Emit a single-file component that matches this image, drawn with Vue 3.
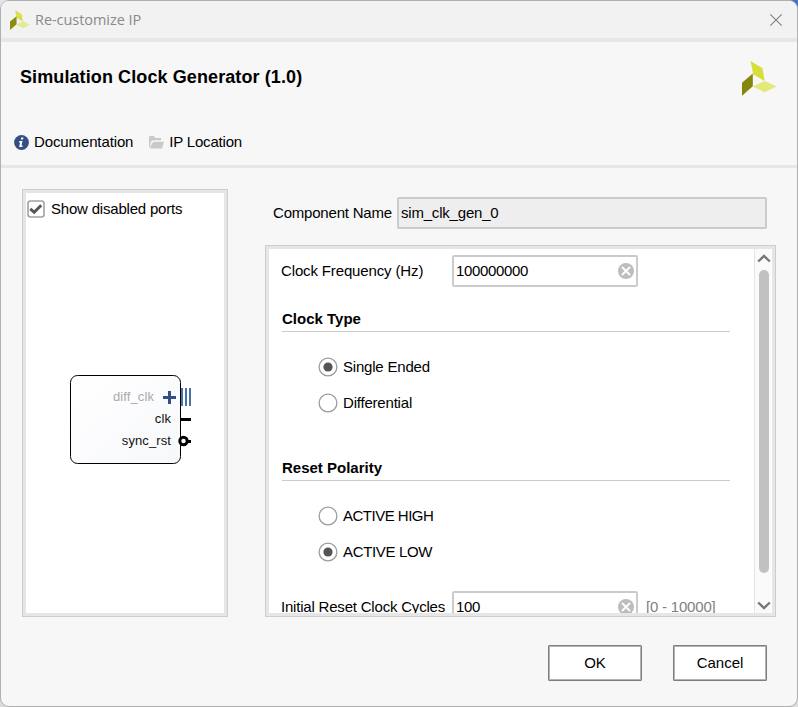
<script setup>
import { ref } from 'vue'

const showDisabled = ref(true)
const componentName = ref('sim_clk_gen_0')
const frequency = ref('100000000')
const resetCycles = ref('100')
const groups = ref([
  { title: 'Clock Type', selected: 'Single Ended', options: ['Single Ended', 'Differential'] },
  { title: 'Reset Polarity', selected: 'ACTIVE LOW', options: ['ACTIVE HIGH', 'ACTIVE LOW'] },
])
</script>

<template>
  <div class="backdrop">
    <main class="dialog">
      <header class="titlebar">
        <svg class="app-icon" width="20" height="20" viewBox="0 0 35 35">
          <path d="M9 0 20.5 7.5 22.5 20 11.5 13.5Z" fill="#d9e04f" />
          <path d="M0 20 11.5 11V25L0 35Z" fill="#8a8c10" />
          <path d="M11 26 23 19.5 35 26 23 32Z" fill="#e4e995" />
        </svg>
        <span class="window-title">Re-customize IP</span>
        <svg class="close" width="14" height="14" viewBox="0 0 14 14">
          <path d="M1.3 1.3 12.7 12.7M12.7 1.3 1.3 12.7" stroke="#858585" stroke-width="1.2" fill="none" />
        </svg>
      </header>

      <section class="heading">
        <div class="heading-row">
          <h1>Simulation Clock Generator (1.0)</h1>
          <svg width="35" height="35" viewBox="0 0 35 35">
            <path d="M8.6 0 20.5 7.3 22.6 20 11.2 13.2Z" fill="#d6de38" />
            <path d="M0 21.7 10.8 12.6V25.2L0 34.8Z" fill="#85870b" />
            <path d="M11 25.6 22.6 20 34.7 25.6 22.6 31.2Z" fill="#e2e97a" />
          </svg>
        </div>
        <nav class="links">
          <a class="link">
            <svg width="15" height="15" viewBox="0 0 15 15">
              <circle cx="7.5" cy="7.5" r="7.4" fill="#344f86" />
              <path d="M7.2 2.5h2.3L9 4.6H6.8ZM5.3 6h3.2L7.5 10.6h1.2L8.4 12H5.1L6.1 7.4H5Z" fill="#fff" />
            </svg>
            <span class="doc">Documentation</span>
          </a>
          <a class="link">
            <svg width="15" height="15" viewBox="0 0 15 15">
              <path d="M0 12.5V2Q0 1 1 1H4.8L6.4 3H12V5.2H4L1.5 7V11Z" fill="#c9c9c9" />
              <path d="M5 6.8H15L12.9 13.6H0.8L3.2 8.2Z" fill="#c9c9c9" />
            </svg>
            <span>IP Location</span>
          </a>
        </nav>
      </section>

      <section class="body">
        <aside class="panel preview">
          <label class="check" @click="showDisabled = !showDisabled">
            <svg width="18" height="18" viewBox="0 0 18 18">
              <rect x="1" y="1" width="16" height="16" rx="2.5" fill="#fff" stroke="#a2a2a2" stroke-width="1.6" />
              <path v-if="showDisabled" d="M3.3 8.8 7.2 12.3 14.2 5.2" fill="none" stroke="#555" stroke-width="2.9" />
            </svg>
            <span>Show disabled ports</span>
          </label>
          <svg class="block" width="124" height="90" viewBox="0 0 124 90">
            <defs>
              <linearGradient id="fill" x1="0" y1="0" x2="1" y2="1">
                <stop offset="0" stop-color="#fff" />
                <stop offset="1" stop-color="#f7f8fb" />
              </linearGradient>
            </defs>
            <rect x=".5" y=".5" width="110" height="88" rx="7" fill="url(#fill)" stroke="#000" />
            <g class="ports">
              <text v-if="showDisabled" x="84" y="26" fill="#aaa">diff_clk</text>
              <text x="101" y="48" fill="#111">clk</text>
              <text x="101" y="70" fill="#111">sync_rst</text>
            </g>
            <path d="M93 22.5H106M99.5 16V29" stroke="#344f86" stroke-width="3" />
            <path d="M112 13V31M116 13V31M120 13V31" stroke="#4672a5" stroke-width="2" />
            <path d="M111 44.5H121M117 66.5H121" stroke="#000" stroke-width="3" />
            <circle cx="113.5" cy="66" r="3.7" fill="#fff" stroke="#000" stroke-width="3" />
          </svg>
        </aside>

        <div class="settings">
          <div class="name-row">
            <span class="name-label">Component Name</span>
            <div class="field disabled"><span>{{ componentName }}</span></div>
          </div>

          <div class="panel options">
            <div class="form">
              <div class="form-row">
                <span class="label freq">Clock Frequency (Hz)</span>
                <div class="field number">
                  <span>{{ frequency }}</span>
                  <svg width="16" height="16" viewBox="0 0 16 16">
                    <circle cx="8" cy="8" r="8" fill="#bdbdbd" />
                    <path d="M4 4 12 12M12 4 4 12" stroke="#fff" stroke-width="1.9" />
                  </svg>
                </div>
              </div>
              <fieldset v-for="g in groups" :key="g.title" class="group">
                <h2>{{ g.title }}</h2>
                <label v-for="o in g.options" :key="o" class="radio" :class="{ high: o === 'ACTIVE HIGH', low: o === 'ACTIVE LOW' }" @click="g.selected = o">
                  <svg width="20" height="20" viewBox="0 0 20 20">
                    <circle cx="10" cy="10" r="8.9" fill="#fff" stroke="#9c9c9c" stroke-width="1.3" />
                    <circle v-if="g.selected === o" cx="10" cy="10" r="4.6" fill="#555" />
                  </svg>
                  <span>{{ o }}</span>
                </label>
              </fieldset>
              <div class="form-row">
                <span class="label">Initial Reset Clock Cycles</span>
                <div class="field number">
                  <span>{{ resetCycles }}</span>
                  <svg width="16" height="16" viewBox="0 0 16 16">
                    <circle cx="8" cy="8" r="8" fill="#bdbdbd" />
                    <path d="M4 4 12 12M12 4 4 12" stroke="#fff" stroke-width="1.9" />
                  </svg>
                </div>
                <span class="hint">[0 - 10000]</span>
              </div>
            </div>
            <div class="scrollbar">
              <svg width="14" height="9" viewBox="0 0 14 9"><path d="M1.2 7.5 7 2 12.8 7.5" fill="none" stroke="#777" stroke-width="2.4" /></svg>
              <div class="thumb"></div>
              <svg width="14" height="9" viewBox="0 0 14 9"><path d="M1.2 1.5 7 7 12.8 1.5" fill="none" stroke="#777" stroke-width="2.4" /></svg>
            </div>
          </div>
        </div>
      </section>

      <footer class="actions">
        <button>OK</button>
        <button>Cancel</button>
      </footer>
    </main>
  </div>
</template>

<style>
body {
  margin: 0;
  overflow: hidden;
}
</style>

<style scoped>
* {
  box-sizing: border-box;
}
.backdrop {
  width: 798px;
  height: 707px;
  background: linear-gradient(90deg, #e4e4e4 50%, #4472c4 50%) top / 100% 12px no-repeat, #dcdcdc;
}
.dialog {
  width: 798px;
  height: 707px;
  border: 1px solid #b0b0b0;
  border-radius: 9px;
  background: #f7f7f7;
  overflow: hidden;
  display: flex;
  flex-direction: column;
  font: 15px/20px "Liberation Sans", Arial, sans-serif;
  letter-spacing: -0.2px;
  color: #000;
  white-space: nowrap;
}
svg {
  display: block;
  flex: none;
}
.titlebar {
  height: 41px;
  flex: none;
  display: flex;
  align-items: center;
  padding: 0 14px 0 9px;
  background: #f2f2f2;
  border-bottom: 4px solid #e6e6e6;
}
.window-title {
  margin-left: 5px;
  font: 14.5px/20px "Open Sans", sans-serif;
  letter-spacing: -0.05px;
  color: #8a8a8a;
}
.close {
  margin-left: auto;
}
.heading {
  height: 126px;
  flex: none;
  border-bottom: 3px solid #e6e6e6;
}
.heading-row {
  display: flex;
  justify-content: space-between;
  padding: 19px 20px 0 19px;
}
h1 {
  margin: 4px 0 0;
  font-size: 18px;
  line-height: 24px;
  letter-spacing: 0.1px;
}
.links {
  display: flex;
  gap: 16px;
  padding: 36px 0 0 13px;
}
.link {
  display: flex;
  align-items: center;
  gap: 5px;
}
.doc {
  letter-spacing: -0.12px;
}
.body {
  height: 449px;
  flex: none;
  display: flex;
  align-items: flex-start;
  gap: 37px;
  padding: 21px 21px 0;
}
.panel {
  border: 1px solid #cdcdcd;
  box-shadow: inset 0 0 0 3px #e6e6e6;
  background: #fff;
  padding: 3px;
}
.preview {
  width: 206px;
  height: 428px;
}
.check {
  display: flex;
  align-items: center;
  gap: 6px;
  padding: 6px 0 0 1px;
}
.block {
  margin: 156px 0 0 44px;
}
.ports {
  font-size: 13px;
  letter-spacing: 0.1px;
  text-anchor: end;
}
.settings {
  width: 511px;
}
.name-row {
  display: flex;
  align-items: center;
  padding: 8px 9px 0 8px;
}
.name-label {
  width: 124px;
}
.field {
  width: 186px;
  height: 32px;
  border: 2px solid #cbcbcb;
  border-radius: 2px;
  background: #fff;
  display: flex;
  align-items: center;
  justify-content: space-between;
  padding: 0 2px;
}
.field.number {
  letter-spacing: -0.34px;
}
.field.disabled {
  width: 370px;
  background: #eee;
}
.options {
  height: 372px;
  margin-top: 16px;
  padding-right: 4px;
  display: flex;
  overflow: hidden;
}
.form {
  flex: 1;
  height: 364px;
  overflow: hidden;
  padding: 6px 0 0 12px;
}
.form-row {
  display: flex;
  align-items: center;
}
.label {
  width: 171px;
}
.freq {
  letter-spacing: -0.14px;
}
.hint {
  margin-left: 8px;
  color: #808080;
}
.group {
  border: 0;
  margin: 0 0 0 1px;
  padding: 22px 0 5px;
  min-width: 0;
  width: 448px;
}
h2 {
  font-size: 15px;
  line-height: 20px;
  letter-spacing: 0;
  height: 23px;
  margin: 0 0 17px;
  border-bottom: 1px solid #cbcbcb;
}
.group + .group {
  padding-top: 32px;
  padding-bottom: 21px;
}
.radio {
  display: flex;
  align-items: center;
  gap: 5px;
  height: 36px;
  padding-left: 36px;
}
.high {
  letter-spacing: -0.5px;
}
.low {
  letter-spacing: -0.35px;
}
.scrollbar {
  width: 17px;
  height: 364px;
  border-left: 1px solid #e4e4e4;
  background: #fafafa;
  display: flex;
  flex-direction: column;
  align-items: center;
  padding: 5px 0 3px 2px;
}
.thumb {
  width: 10px;
  height: 303px;
  margin: 7px 0 auto;
  border-radius: 5px;
  background: #c1c1c1;
}
.actions {
  display: flex;
  justify-content: flex-end;
  gap: 31px;
  padding: 28px 30px 0 0;
}
button {
  width: 94px;
  height: 36px;
  border: 1px solid #7e7e7e;
  box-shadow: inset 0 0 0 1px #b4b4b4;
  border-radius: 1px;
  background: #fff;
  color: #000;
  font: inherit;
  letter-spacing: 0;
  padding: 0;
}
</style>
